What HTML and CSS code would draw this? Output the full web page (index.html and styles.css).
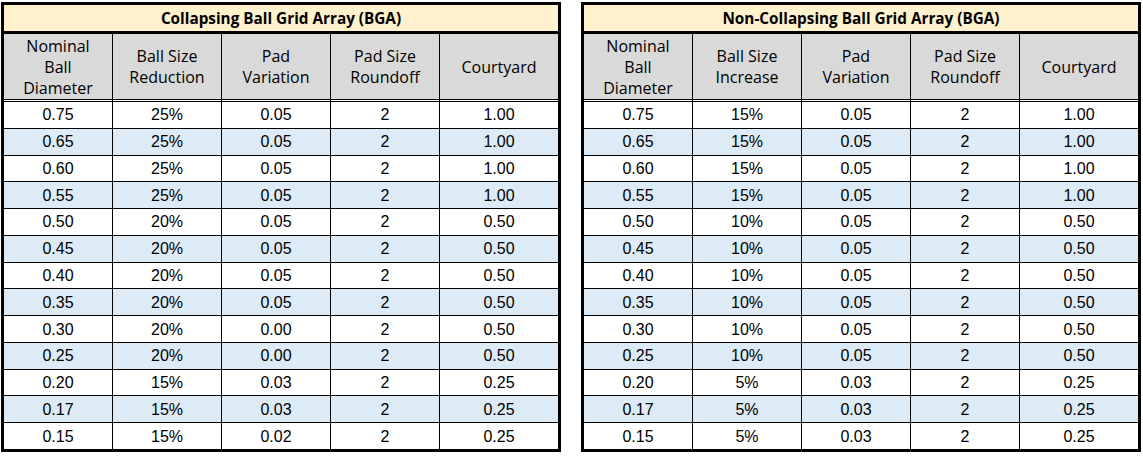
FILE: index.html
```html
<!DOCTYPE html>
<html lang="en">
<head>
<meta charset="utf-8">
<title>BGA Tables</title>
<link rel="stylesheet" href="styles.css">
</head>
<body>
<div class="page">
  <table class="bga">
    <colgroup><col class="c1"><col class="c2"><col class="c3"><col class="c4"><col class="c5"></colgroup>
    <thead>
      <tr><th class="title" colspan="5">Collapsing Ball Grid Array (BGA)</th></tr>
      <tr class="hdr"><th>Nominal<br>Ball<br>Diameter</th><th>Ball Size<br>Reduction</th><th>Pad<br>Variation</th><th>Pad Size<br>Roundoff</th><th>Courtyard</th></tr>
    </thead>
    <tbody>
      <tr><td>0.75</td><td>25%</td><td>0.05</td><td>2</td><td>1.00</td></tr>
      <tr><td>0.65</td><td>25%</td><td>0.05</td><td>2</td><td>1.00</td></tr>
      <tr><td>0.60</td><td>25%</td><td>0.05</td><td>2</td><td>1.00</td></tr>
      <tr><td>0.55</td><td>25%</td><td>0.05</td><td>2</td><td>1.00</td></tr>
      <tr><td>0.50</td><td>20%</td><td>0.05</td><td>2</td><td>0.50</td></tr>
      <tr><td>0.45</td><td>20%</td><td>0.05</td><td>2</td><td>0.50</td></tr>
      <tr><td>0.40</td><td>20%</td><td>0.05</td><td>2</td><td>0.50</td></tr>
      <tr><td>0.35</td><td>20%</td><td>0.05</td><td>2</td><td>0.50</td></tr>
      <tr><td>0.30</td><td>20%</td><td>0.00</td><td>2</td><td>0.50</td></tr>
      <tr><td>0.25</td><td>20%</td><td>0.00</td><td>2</td><td>0.50</td></tr>
      <tr><td>0.20</td><td>15%</td><td>0.03</td><td>2</td><td>0.25</td></tr>
      <tr><td>0.17</td><td>15%</td><td>0.03</td><td>2</td><td>0.25</td></tr>
      <tr><td>0.15</td><td>15%</td><td>0.02</td><td>2</td><td>0.25</td></tr>
    </tbody>
  </table>
  <table class="bga">
    <colgroup><col class="c1"><col class="c2"><col class="c3"><col class="c4"><col class="c5"></colgroup>
    <thead>
      <tr><th class="title" colspan="5">Non-Collapsing Ball Grid Array (BGA)</th></tr>
      <tr class="hdr"><th>Nominal<br>Ball<br>Diameter</th><th>Ball Size<br>Increase</th><th>Pad<br>Variation</th><th>Pad Size<br>Roundoff</th><th>Courtyard</th></tr>
    </thead>
    <tbody>
      <tr><td>0.75</td><td>15%</td><td>0.05</td><td>2</td><td>1.00</td></tr>
      <tr><td>0.65</td><td>15%</td><td>0.05</td><td>2</td><td>1.00</td></tr>
      <tr><td>0.60</td><td>15%</td><td>0.05</td><td>2</td><td>1.00</td></tr>
      <tr><td>0.55</td><td>15%</td><td>0.05</td><td>2</td><td>1.00</td></tr>
      <tr><td>0.50</td><td>10%</td><td>0.05</td><td>2</td><td>0.50</td></tr>
      <tr><td>0.45</td><td>10%</td><td>0.05</td><td>2</td><td>0.50</td></tr>
      <tr><td>0.40</td><td>10%</td><td>0.05</td><td>2</td><td>0.50</td></tr>
      <tr><td>0.35</td><td>10%</td><td>0.05</td><td>2</td><td>0.50</td></tr>
      <tr><td>0.30</td><td>10%</td><td>0.05</td><td>2</td><td>0.50</td></tr>
      <tr><td>0.25</td><td>10%</td><td>0.05</td><td>2</td><td>0.50</td></tr>
      <tr><td>0.20</td><td>5%</td><td>0.03</td><td>2</td><td>0.25</td></tr>
      <tr><td>0.17</td><td>5%</td><td>0.03</td><td>2</td><td>0.25</td></tr>
      <tr><td>0.15</td><td>5%</td><td>0.03</td><td>2</td><td>0.25</td></tr>
    </tbody>
  </table>
</div>
</body>
</html>
```
FILE: styles.css
```css
html, body {
  margin: 0;
  padding: 0;
  background: #ffffff;
}
.page {
  display: flex;
  gap: 20px;
  padding: 2px 0 0 1px;
  align-items: flex-start;
}
.bga {
  width: 560px;
  table-layout: fixed;
  border-collapse: separate;
  border-spacing: 0;
  border: 3px solid #000;
  background: #ffffff;
  color: #000;
}
.c1, .c2, .c3, .c4 { width: 109px; }
.c5 { width: 118px; }
.bga th, .bga td {
  padding: 0;
  text-align: center;
  border-right: 1px solid #000;
  border-bottom: 1px solid #000;
}
.bga th:last-child, .bga td:last-child { border-right: 0; }
.bga tbody tr:last-child td { border-bottom: 0; }
.title {
  height: 26px;
  background: #fff2cc;
  font-family: "Open Sans", "Noto Sans", sans-serif;
  font-weight: 700;
  font-size: 15.3px;
  line-height: 18px;
  border-bottom: 3px solid #000 !important;
  border-right: 0 !important;
}
.hdr th {
  height: 64px;
  padding-top: 1px;
  background: #d9d9d9;
  background-clip: padding-box;
  font-family: "Open Sans", "Noto Sans", sans-serif;
  font-weight: 400;
  font-size: 16px;
  line-height: 21px;
  border-bottom: 3px double #000;
}
.bga td {
  height: 24.77px;
  padding-top: 1px;
  font-family: "Liberation Sans", Arial, sans-serif;
  font-size: 16px;
  line-height: 16px;
}
.bga tbody tr:nth-child(even) td {
  background: #ddebf7;
}
```
